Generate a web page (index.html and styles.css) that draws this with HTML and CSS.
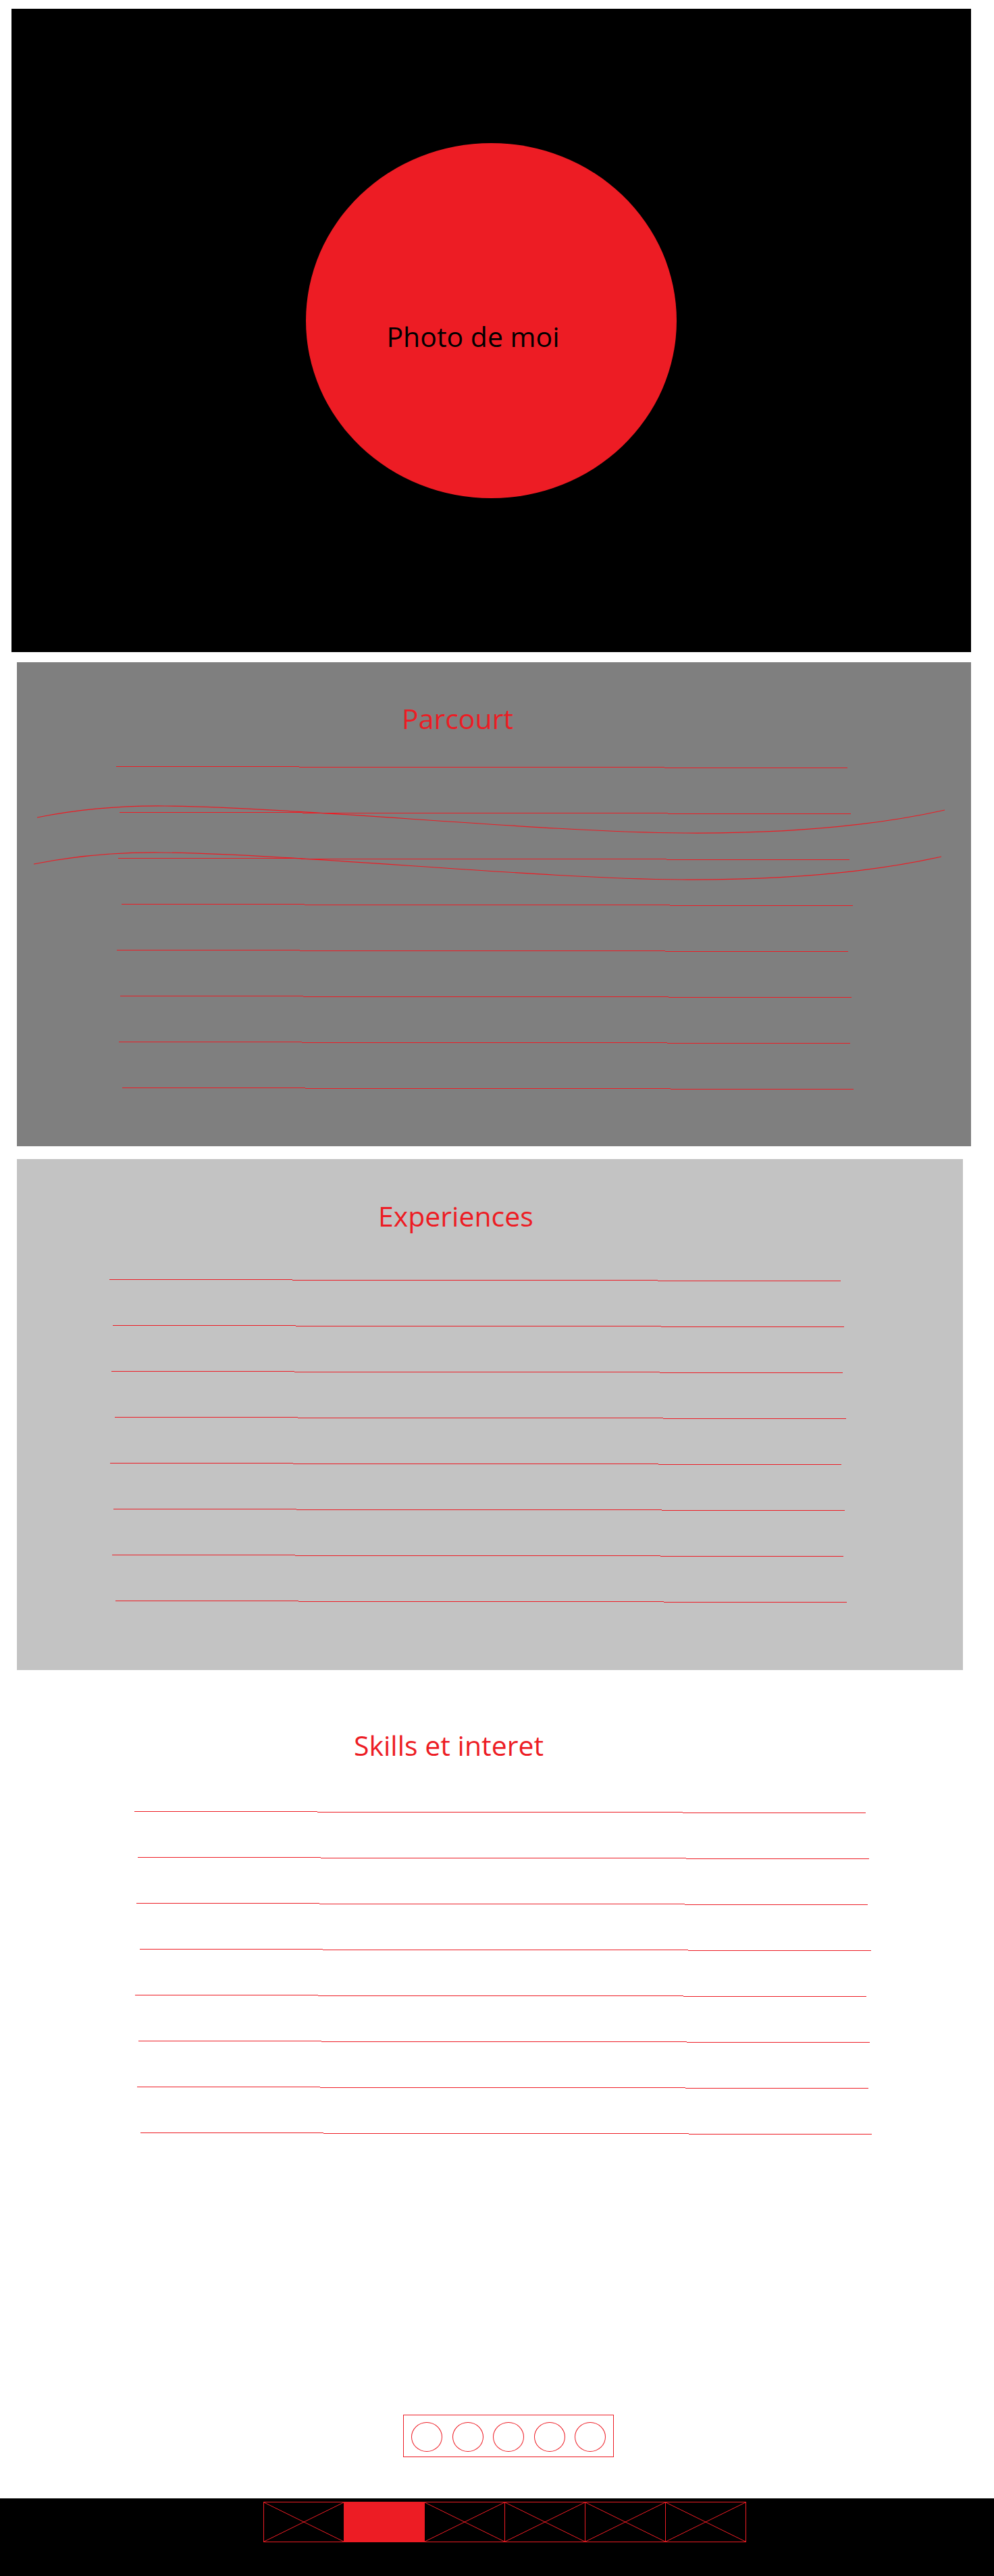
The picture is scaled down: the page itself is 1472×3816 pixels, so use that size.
FILE: index.html
```html
<!DOCTYPE html>
<html lang="fr">
<head>
    <meta charset="UTF-8">
    <meta name="viewport" content="width=device-width, initial-scale=1.0">
    <title>Portfolio - maquette</title>
    <link rel="stylesheet" href="styles.css">
</head>
<body>
    <header class="hero">
        <div class="photo"><span>Photo de moi</span></div>
    </header>

    <section class="bloc parcours">
        <h2 class="titre">Parcourt</h2>
        <div class="lignes">
            <div class="ligne"><span></span><span></span><span></span></div>
            <div class="ligne"><span></span><span></span><span></span></div>
            <div class="ligne"><span></span><span></span><span></span></div>
            <div class="ligne"><span></span><span></span><span></span></div>
            <div class="ligne"><span></span><span></span><span></span></div>
            <div class="ligne"><span></span><span></span><span></span></div>
            <div class="ligne"><span></span><span></span><span></span></div>
            <div class="ligne"><span></span><span></span><span></span></div>
        </div>
        <!-- les deux vagues dessinees par dessus -->
        <svg class="vagues" viewBox="0 0 1413 717">
            <path d="M30 230 Q120 212 219 213 C420 215 780 252 989 253 C1150 254 1280 240 1374 219"/>
            <path d="M30 230 Q120 212 219 213 C420 215 780 252 989 253 C1150 254 1280 240 1374 219" transform="translate(-5 69)"/>
        </svg>
    </section>

    <section class="bloc experiences">
        <h2 class="titre">Experiences</h2>
        <div class="lignes">
            <div class="ligne"><span></span><span></span><span></span></div>
            <div class="ligne"><span></span><span></span><span></span></div>
            <div class="ligne"><span></span><span></span><span></span></div>
            <div class="ligne"><span></span><span></span><span></span></div>
            <div class="ligne"><span></span><span></span><span></span></div>
            <div class="ligne"><span></span><span></span><span></span></div>
            <div class="ligne"><span></span><span></span><span></span></div>
            <div class="ligne"><span></span><span></span><span></span></div>
        </div>
    </section>

    <section class="bloc skills">
        <h2 class="titre">Skills et interet</h2>
        <div class="lignes">
            <div class="ligne"><span></span><span></span><span></span></div>
            <div class="ligne"><span></span><span></span><span></span></div>
            <div class="ligne"><span></span><span></span><span></span></div>
            <div class="ligne"><span></span><span></span><span></span></div>
            <div class="ligne"><span></span><span></span><span></span></div>
            <div class="ligne"><span></span><span></span><span></span></div>
            <div class="ligne"><span></span><span></span><span></span></div>
            <div class="ligne"><span></span><span></span><span></span></div>
        </div>
    </section>

    <div class="reseaux">
        <span class="rond"></span>
        <span class="rond"></span>
        <span class="rond"></span>
        <span class="rond"></span>
        <span class="rond"></span>
    </div>

    <footer class="pied">
        <nav class="nav">
            <a class="case"><svg viewBox="0 0 100 100" preserveAspectRatio="none"><path d="M0 0L100 100M100 0L0 100"/></svg></a>
            <a class="case pleine"></a>
            <a class="case"><svg viewBox="0 0 100 100" preserveAspectRatio="none"><path d="M0 0L100 100M100 0L0 100"/></svg></a>
            <a class="case"><svg viewBox="0 0 100 100" preserveAspectRatio="none"><path d="M0 0L100 100M100 0L0 100"/></svg></a>
            <a class="case"><svg viewBox="0 0 100 100" preserveAspectRatio="none"><path d="M0 0L100 100M100 0L0 100"/></svg></a>
            <a class="case"><svg viewBox="0 0 100 100" preserveAspectRatio="none"><path d="M0 0L100 100M100 0L0 100"/></svg></a>
        </nav>
    </footer>
</body>
</html>
```

FILE: styles.css
```css
* {
    margin: 0;
    padding: 0;
    box-sizing: border-box;
    font-family: 'Open Sans', sans-serif;
}
body {
    background-color: #ffffff;
}
.hero {
    margin: 13px 0 0 17px;
    width: 1421px;
    height: 953px;
    background: #000000;
    display: flex;
    align-items: center;
    justify-content: center;
    padding-bottom: 29px;
}
.photo {
    width: 549px;
    height: 526px;
    border-radius: 50%;
    background: #ed1c24;
    display: flex;
    align-items: center;
    justify-content: center;
    padding: 46px 54px 0 0;
    font-size: 41px;
    line-height: 1;
    color: #000000;
}
.bloc {
    position: relative;
}
.titre {
    font-size: 41px;
    font-weight: normal;
    line-height: 1;
    color: #ed1c24;
}
.parcours {
    margin: 15px 0 0 25px;
    width: 1413px;
    height: 717px;
    background: #7f7f7f;
    padding-top: 63px;
}
.parcours .titre {
    margin-left: 570px;
}
.parcours .lignes {
    margin: 50px 0 0 147px;
}
.experiences {
    margin: 19px 0 0 25px;
    width: 1401px;
    height: 757px;
    background: #c3c3c3;
    padding-top: 64px;
}
.experiences .titre {
    margin-left: 535px;
}
.experiences .lignes {
    margin: 73px 0 0 137px;
}
.skills {
    padding-top: 91px;
}
.skills .titre {
    margin-left: 524px;
}
.skills .lignes {
    margin: 77px 0 0 199px;
}
.lignes {
    display: flex;
    flex-direction: column;
    gap: 65px;
}
.ligne {
    display: flex;
    align-items: flex-start;
}
.ligne span {
    height: 1px;
    background: #ed1c24;
}
.ligne span:nth-child(1) {
    width: 271px;
}
.ligne span:nth-child(2) {
    width: 541px;
    margin-top: 1px;
}
.ligne span:nth-child(3) {
    width: 271px;
    margin-top: 2px;
}
/* petits decalages du trace a la main */
.ligne:nth-child(2) { margin-left: 5px; }
.ligne:nth-child(3) { margin-left: 3px; }
.ligne:nth-child(4) { margin-left: 8px; }
.ligne:nth-child(5) { margin-left: 1px; }
.ligne:nth-child(6) { margin-left: 6px; }
.ligne:nth-child(7) { margin-left: 4px; }
.ligne:nth-child(8) { margin-left: 9px; }
.vagues {
    position: absolute;
    left: 0;
    top: 0;
    width: 1413px;
    height: 717px;
    pointer-events: none;
}
.vagues path {
    fill: none;
    stroke: #ed1c24;
    stroke-width: 1.2;
}
.reseaux {
    margin: 415px 0 0 597px;
    width: 312px;
    height: 63px;
    border: 1px solid #ed1c24;
    display: flex;
    gap: 14.5px;
    padding: 10px 0 0 11px;
}
.rond {
    width: 46px;
    height: 44px;
    border: 1px solid #ed1c24;
    border-radius: 50%;
}
.pied {
    margin-top: 61px;
    height: 117px;
    background: #000000;
    padding: 5px 0 0 390px;
}
.nav {
    display: flex;
}
.case {
    display: block;
    width: 120px;
    height: 60px;
    border: 1px solid #ed1c24;
}
.case + .case {
    margin-left: -1px;
}
.case.pleine {
    background: #ed1c24;
}
.case svg {
    display: block;
    width: 100%;
    height: 100%;
}
.case svg path {
    fill: none;
    stroke: #ed1c24;
    stroke-width: 1;
    vector-effect: non-scaling-stroke;
}
```
